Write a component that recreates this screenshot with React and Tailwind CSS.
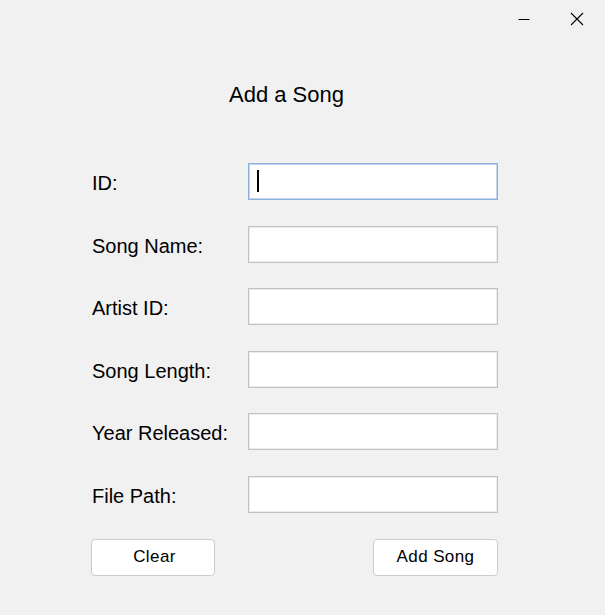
import { useState } from 'react';

const FIELDS = ['ID:', 'Song Name:', 'Artist ID:', 'Song Length:', 'Year Released:', 'File Path:'];

export default function App() {
  const [values, setValues] = useState(FIELDS.map(() => ''));

  const setValue = (i, v) => setValues(vals => vals.map((x, j) => (j === i ? v : x)));

  return (
    <div className="w-[605px] h-[615px] bg-[#f1f1f1] text-black font-['Liberation_Sans',Arial,sans-serif] overflow-hidden">
      {/* window controls */}
      <div className="flex justify-end h-[38px]">
        <div className="w-[50px] h-[38px] flex items-center justify-center">
          <svg width="12" height="12" viewBox="0 0 12 12">
            <path d="M0.5 6.5H11.5" stroke="#000" strokeWidth="1" />
          </svg>
        </div>
        <div className="w-[56px] h-[38px] flex items-start justify-center pt-[12px]">
          <svg width="14" height="14" viewBox="0 0 14 14">
            <path d="M1 1L13 13M13 1L1 13" stroke="#000" strokeWidth="1.1" />
          </svg>
        </div>
      </div>

      <h1 className="text-[22px] leading-none pl-[229px] mt-[46px]">Add a Song</h1>

      <div className="flex flex-col gap-[25.5px] pl-[92px] mt-[57px]">
        {FIELDS.map((label, i) => (
          <div key={label} className="flex items-center">
            <span className="w-[156px] text-[20px] leading-none pt-[3px]">{label}</span>
            <div className="relative">
              <input
                value={values[i]}
                onChange={e => setValue(i, e.target.value)}
                className={`w-[250px] h-[37px] bg-white outline-none px-2 text-[16px] ${
                  i === 0
                    ? 'border border-[#8cb0dd] shadow-[inset_0_0_0_1px_#c3d6ee]'
                    : 'border border-[#c2c2c2] shadow-[inset_0_0_0_1px_#ececec]'
                }`}
              />
              {i === 0 && values[0] === '' && (
                <span className="absolute left-[9px] top-[7px] w-[2px] h-[22px] bg-black" />
              )}
            </div>
          </div>
        ))}
      </div>

      <div className="flex justify-between w-[407px] ml-[91px] mt-[26px]">
        <button
          onClick={() => setValues(FIELDS.map(() => ''))}
          className="w-[124px] h-[37px] bg-white border border-[#cccccc] rounded-[4px] text-[17px] tracking-[0.4px] pl-[3px]"
        >
          Clear
        </button>
        <button className="w-[125px] h-[37px] bg-white border border-[#cccccc] rounded-[4px] text-[17px] tracking-[0.4px]">
          Add Song
        </button>
      </div>
    </div>
  );
}
